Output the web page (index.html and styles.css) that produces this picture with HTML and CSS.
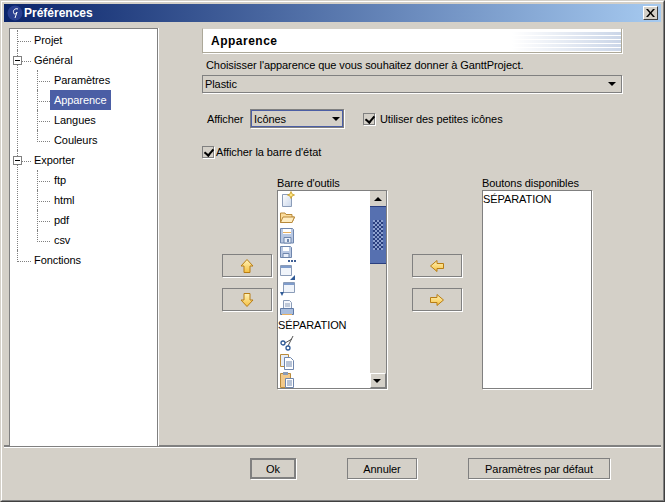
FILE: index.html
```html
<!DOCTYPE html>
<html lang="fr">

<head>
    <meta charset="utf-8">
    <title>Préférences</title>
    <link rel="stylesheet" href="styles.css">
</head>

<body>
    <svg class="defs" width="0" height="0">
        <defs>
            <linearGradient id="gold" x1="0" y1="0" x2="0" y2="1">
                <stop offset="0" stop-color="#fff3b8" />
                <stop offset="1" stop-color="#f5c040" />
            </linearGradient>
            <linearGradient id="paper" x1="0" y1="0" x2="1" y2="1">
                <stop offset="0" stop-color="#fff" />
                <stop offset="1" stop-color="#c9d6ea" />
            </linearGradient>
        </defs>
    </svg>

    <div class="window">
        <div class="window-inner">
            <div class="titlebar">
                <svg class="app-icon" width="16" height="16" viewBox="0 0 16 16">
                    <circle cx="8" cy="8" r="7.5" fill="#2a3f8f" />
                    <path d="M11 4C8 3 6 5 6.500 7.500S9 9 10 7L8 13" fill="none" stroke="#fff" stroke-width="1" />
                </svg>
                <span class="title">Préférences</span>
                <button class="close">
                    <svg width="9" height="8" viewBox="0 0 9 8">
                        <path d="M0 0h2l2.500 3L7 0h2L5.500 4 9 8H7L4.500 5 2 8H0l3.500-4z" fill="#000" />
                    </svg>
                </button>
            </div>

            <div class="main">
                <ul class="tree">
                    <li><span class="node">Projet</span></li>
                    <li>
                        <span class="toggle"></span>
                        <span class="node">Général</span>
                        <ul>
                            <li><span class="node">Paramètres</span></li>
                            <li><span class="node selected">Apparence</span></li>
                            <li><span class="node">Langues</span></li>
                            <li><span class="node">Couleurs</span></li>
                        </ul>
                    </li>
                    <li>
                        <span class="toggle"></span>
                        <span class="node">Exporter</span>
                        <ul>
                            <li><span class="node">ftp</span></li>
                            <li><span class="node">html</span></li>
                            <li><span class="node">pdf</span></li>
                            <li><span class="node">csv</span></li>
                        </ul>
                    </li>
                    <li><span class="node">Fonctions</span></li>
                </ul>

                <div class="pane">
                    <div class="pane-header">Apparence</div>
                    <p class="intro">Choisisser l'apparence que vous souhaitez donner à GanttProject.</p>
                    <div class="combo combo-wide">
                        <span>Plastic</span>
                        <span class="caret"></span>
                    </div>

                    <div class="display-row">
                        <span class="display-label">Afficher</span>
                        <div class="combo combo-focus">
                            <span>Icônes</span>
                            <span class="caret"></span>
                        </div>
                        <label class="check check-small"><span class="box"></span>Utiliser des petites icônes</label>
                    </div>

                    <label class="check check-status"><span class="box"></span>Afficher la barre d'état</label>

                    <div class="editor">
                        <div class="move-buttons">
                            <button class="btn-icon">
                                <svg width="14" height="14" viewBox="0 0 14 14">
                                    <path d="M7 .5 13 7H10v6.500H4V7H1z" fill="url(#gold)" stroke="#b87d14" />
                                </svg>
                            </button>
                            <button class="btn-icon">
                                <svg width="14" height="14" viewBox="0 0 14 14">
                                    <path d="M7 13.500 13 7H10V.5H4V7H1z" fill="url(#gold)" stroke="#b87d14" />
                                </svg>
                            </button>
                        </div>

                        <div class="list-col">
                            <div class="list-title">Barre d'outils</div>
                            <div class="list list-scroll">
                                <div class="rows">
                                    <div class="row">
                                        <svg width="16" height="18" viewBox="0 0 16 18">
                                            <path d="M3.500 3.500h9v12h-9z" fill="url(#paper)" stroke="#8b9cb8" />
                                            <path d="M12 .5 13 3l2.500 1-2.500 1-1 2.500L11 5 8.500 4 11 3z" fill="#ffe680" stroke="#c89a20" stroke-width=".8" />
                                        </svg>
                                    </div>
                                    <div class="row">
                                        <svg width="16" height="18" viewBox="0 0 16 18">
                                            <path d="M1.500 4V13.500H13L15.500 8H13V5.500H7L6 4z" fill="#fbdc9c" stroke="#b98a3a" />
                                            <path d="M1.500 13.500 4 8H15.500L13 13.500z" fill="#ffedc2" stroke="#b98a3a" />
                                        </svg>
                                    </div>
                                    <div class="row">
                                        <svg width="16" height="18" viewBox="0 0 16 18">
                                            <path d="M1.500 1.500h12l1 1v13.500H1.500z" fill="#b9c8e2" stroke="#6f86ad" />
                                            <path d="M4 2h8v5H4z" fill="#fff" />
                                            <path d="M4 5.500h8" stroke="#e8b060" />
                                            <path d="M5 10.500h7v5.500H5z" fill="#e8eef8" stroke="#6f86ad" />
                                            <path d="M8 12h2v3H8z" fill="#6f86ad" />
                                        </svg>
                                    </div>
                                    <div class="row">
                                        <svg width="17" height="18" viewBox="0 0 17 18">
                                            <path d="M1.500 1.500h10l1 1v10H1.500z" fill="#b9c8e2" stroke="#6f86ad" />
                                            <path d="M4 2h6v4H4z" fill="#fff" />
                                            <path d="M4 8.500h6v4H4z" fill="#e8eef8" stroke="#6f86ad" />
                                            <path d="M9 15h2v2H9zm3 0h2v2h-2zm3 0h2v2h-2z" fill="#3f5f95" />
                                        </svg>
                                    </div>
                                    <div class="row">
                                        <svg width="17" height="18" viewBox="0 0 17 18">
                                            <path d="M1.500 2.500h11v10h-11z" fill="#f0f4fa" stroke="#8b9cb8" />
                                            <path d="M2 3h10v2H2z" fill="#7f9ccb" />
                                            <path d="M16 12v5h-5z" fill="#2f5a96" />
                                        </svg>
                                    </div>
                                    <div class="row">
                                        <svg width="17" height="18" viewBox="0 0 17 18">
                                            <path d="M4.500 1.500h11v10h-11z" fill="#f0f4fa" stroke="#8b9cb8" />
                                            <path d="M5 2h10v2H5z" fill="#7f9ccb" />
                                            <path d="M1 11h4l-2 4z" fill="#2f5a96" />
                                        </svg>
                                    </div>
                                    <div class="row">
                                        <svg width="16" height="18" viewBox="0 0 16 18">
                                            <path d="M4.500 1.500h6l2 2v6h-8z" fill="#f4f6fb" stroke="#8b9cb8" />
                                            <path d="M6 5h5M6 7h5" stroke="#8b9cb8" />
                                            <path d="M1.500 9.500h13v6h-13z" fill="#a9bddd" stroke="#5f7aa6" />
                                            <path d="M3 15h10v1H3z" fill="#e8b060" />
                                        </svg>
                                    </div>
                                    <div class="row row-text">SÉPARATION</div>
                                    <div class="row">
                                        <svg width="16" height="18" viewBox="0 0 16 18">
                                            <path d="M14 1 9 11M13 4 6 8" stroke="#555" fill="none" />
                                            <circle cx="4" cy="8" r="2" fill="#fff" stroke="#2f5a96" stroke-width="1.300" />
                                            <circle cx="9" cy="13" r="2" fill="#fff" stroke="#2f5a96" stroke-width="1.300" />
                                        </svg>
                                    </div>
                                    <div class="row">
                                        <svg width="16" height="18" viewBox="0 0 16 18">
                                            <path d="M1.500 1.500h8v12h-8z" fill="#e6edf8" stroke="#b98a3a" />
                                            <path d="M5.500 4.500h6l3 3v9h-9z" fill="#fff" stroke="#6f86ad" />
                                            <path d="M7 9h6M7 11h6M7 13h6" stroke="#6f86ad" />
                                        </svg>
                                    </div>
                                    <div class="row">
                                        <svg width="16" height="18" viewBox="0 0 16 18">
                                            <path d="M1.500 2.500h10v14h-10z" fill="#f2c98a" stroke="#b98a3a" />
                                            <path d="M4 1h5v3H4z" fill="#8b9cb8" />
                                            <path d="M6.500 7.500h8v9h-8z" fill="#fff" stroke="#6f86ad" />
                                            <path d="M8 10h5M8 12h5M8 14h5" stroke="#6f86ad" />
                                        </svg>
                                    </div>
                                </div>
                                <div class="scrollbar">
                                    <div class="scroll-btn"><span class="caret caret-up"></span></div>
                                    <div class="scroll-thumb"><span class="grip"></span></div>
                                    <div class="scroll-track"></div>
                                    <div class="scroll-btn scroll-btn-down"><span class="caret"></span></div>
                                </div>
                            </div>
                        </div>

                        <div class="move-buttons">
                            <button class="btn-icon">
                                <svg width="14" height="12" viewBox="0 0 14 12">
                                    <path d="M.5 6 7 .5V3.500H13.500V8.500H7V11.500z" fill="url(#gold)" stroke="#b87d14" />
                                </svg>
                            </button>
                            <button class="btn-icon">
                                <svg width="14" height="12" viewBox="0 0 14 12">
                                    <path d="M13.500 6 7 .5V3.500H.5V8.500H7V11.500z" fill="url(#gold)" stroke="#b87d14" />
                                </svg>
                            </button>
                        </div>

                        <div class="list-col">
                            <div class="list-title">Boutons disponibles</div>
                            <div class="list">
                                <div class="rows">
                                    <div class="row row-text">SÉPARATION</div>
                                </div>
                            </div>
                        </div>
                    </div>
                </div>
            </div>

            <div class="footer">
                <button class="btn btn-default">Ok</button>
                <button class="btn btn-cancel">Annuler</button>
                <button class="btn btn-reset">Paramètres par défaut</button>
            </div>
        </div>
    </div>
</body>

</html>
```

FILE: styles.css
```css
* {
    box-sizing: border-box;
    font-family: "Liberation Sans", Tahoma, sans-serif;
}

html,
body {
    margin: 0;
    background-color: #d4d0c8;
}

body {
    font-size: 11px;
    letter-spacing: -.08px;
    color: #000;
}

.defs {
    position: absolute;
}

button {
    font-size: 11px;
    letter-spacing: -.08px;
    color: #000;
    padding: 0;
    background-color: #d4d0c8;
}

/* window frame */
.window {
    width: 665px;
    height: 502px;
    border: 1px solid;
    border-color: #d4d0c8 #404040 #404040 #d4d0c8;
}

.window-inner {
    height: 100%;
    border: 1px solid;
    border-color: #fff #808080 #808080 #fff;
    padding: 2px;
    display: flex;
    flex-direction: column;
}

.titlebar {
    height: 18px;
    flex: none;
    display: flex;
    align-items: center;
    padding: 0 3px;
    background: linear-gradient(to right, #0a246a, #a6caf0);
}

.app-icon {
    margin-right: 1px;
}

.title {
    color: #fff;
    font-weight: bold;
    font-size: 12px;
    letter-spacing: 0;
    flex: 1;
}

.close {
    width: 15px;
    height: 14px;
    display: flex;
    align-items: center;
    justify-content: center;
    border: 1px solid;
    border-color: #fff #404040 #404040 #fff;
}

.main {
    height: 426px;
    flex: none;
    display: flex;
    padding: 6px 0 0 5px;
    border-bottom: 1px solid #fff;
    box-shadow: inset 0 -2px 0 #808080;
}

/* tree */
.tree {
    width: 149px;
    height: 418px;
    flex: none;
    margin: 0;
    padding: 1px 0 0 7px;
    list-style: none;
    background-color: #fff;
    border: 1px solid #808080;
    border-bottom: 0;
    box-shadow: 1px 0 0 #fff;
}

.tree ul {
    margin: 0;
    padding: 0 0 0 6px;
    list-style: none;
}

.tree li {
    position: relative;
    padding-left: 14px;
}

.tree li::before {
    content: "";
    position: absolute;
    left: 0;
    top: 0;
    width: 13px;
    height: 11px;
    border-left: 1px dotted #808080;
    border-bottom: 1px dotted #808080;
}

.tree li:not(:last-child)::after {
    content: "";
    position: absolute;
    left: 0;
    top: 0;
    bottom: 0;
    border-left: 1px dotted #808080;
}

.tree ul li {
    padding-left: 13px;
}

.tree ul li::before {
    width: 12px;
}

.node {
    display: inline-block;
    height: 20px;
    line-height: 20px;
    padding: 0 3px;
    vertical-align: top;
}

.tree ul .node {
    padding: 0 4px;
}

.selected {
    color: #fff;
    background-color: #4b5ea5;
}

.toggle {
    position: absolute;
    z-index: 1;
    left: -4px;
    top: 6px;
    width: 9px;
    height: 9px;
    background: #fff linear-gradient(#000, #000) center / 5px 1px no-repeat;
    border: 1px solid #808080;
}

/* right side */
.pane {
    width: 420px;
    margin-left: 44px;
    flex: none;
}

.pane-header {
    height: 25px;
    line-height: 25px;
    padding-left: 8px;
    font-size: 12px;
    font-weight: bold;
    letter-spacing: .5px;
    border: 1px solid;
    border-color: #d4d0c8 #aca899 #aca899 #aca899;
    box-shadow: 1px 1px 0 #fff;
    background:
        linear-gradient(to right, #fff 74%, rgba(255, 255, 255, 0) 100%),
        repeating-linear-gradient(to bottom, #cbd6e8 0, #cbd6e8 3px, #fff 3px, #fff 4px) 0 3px / 100% 19px no-repeat,
        #fff;
}

.intro {
    margin: 5px 0 0 4px;
    height: 14px;
    line-height: 14px;
}

.combo {
    display: flex;
    align-items: center;
    justify-content: space-between;
    border: 1px solid #808080;
    box-shadow: 1px 1px 0 #fff;
}

.combo-wide {
    height: 18px;
    margin-top: 3px;
    padding: 0 3px 0 2px;
}

.combo-focus {
    width: 94px;
    height: 19px;
    padding: 0 1px 0 3px;
    margin-right: 19px;
    box-shadow: inset 0 0 0 1px #4b5ea5, 1px 1px 0 #fff;
}

.caret {
    width: 0;
    height: 0;
    border-left: 4px solid transparent;
    border-right: 4px solid transparent;
    border-top: 4px solid #000;
    margin-right: 2px;
}

.caret-up {
    margin: 0;
    border-top: 0;
    border-bottom: 4px solid #000;
}

.display-row {
    display: flex;
    align-items: center;
    margin: 16px 0 0 5px;
}

.display-label {
    width: 43px;
}

.check {
    display: flex;
    align-items: center;
    height: 14px;
}

.check-small .box {
    margin-right: 5px;
}

.check-status {
    margin-top: 17px;
}

.box {
    width: 12px;
    height: 12px;
    margin-right: 2px;
    border: 1px solid #808080;
    box-shadow: 1px 1px 0 #fff;
    position: relative;
}

.box::after {
    content: "";
    position: absolute;
    left: 3px;
    top: 0;
    width: 4px;
    height: 7px;
    border: solid #000;
    border-width: 0 2px 2px 0;
    transform: rotate(40deg);
}

/* toolbar editor */
.editor {
    display: flex;
    margin: 17px 0 0 20px;
}

.move-buttons {
    width: 50px;
    flex: none;
    display: flex;
    flex-direction: column;
    gap: 11px;
    padding-top: 78px;
}

.btn-icon {
    height: 23px;
    display: flex;
    align-items: center;
    justify-content: center;
    border: 1px solid #808080;
    box-shadow: 1px 1px 0 #fff;
}

.list-col {
    width: 110px;
    flex: none;
    margin-left: 5px;
}

.list-col:last-child {
    margin-left: 20px;
}

.list-col:nth-child(2) {
    margin-right: 25px;
}

.list-title {
    height: 14px;
    line-height: 14px;
    white-space: nowrap;
}

.list {
    height: 199px;
    display: flex;
    background-color: #fff;
    border: 1px solid #808080;
    box-shadow: 1px 1px 0 #fff;
}

.rows {
    flex: 1;
    overflow: hidden;
}

.row {
    height: 18px;
    padding-left: 1px;
    display: flex;
    align-items: center;
}

.row-text {
    padding-left: 0;
    padding-bottom: 3px;
}

.scrollbar {
    width: 16px;
    flex: none;
    display: flex;
    flex-direction: column;
    background-color: #d4d0c8;
}

.scroll-btn {
    height: 15px;
    display: flex;
    align-items: center;
    justify-content: center;
}

.scroll-btn-down {
    border: 1px solid;
    border-color: #fff #808080 #808080 #fff;
}

.scroll-thumb {
    height: 58px;
    display: flex;
    align-items: center;
    justify-content: center;
    background-color: #5670b0;
    border: 1px solid #2a3f7f;
    border-width: 1px 0;
}

.grip {
    width: 10px;
    height: 30px;
    background: repeating-conic-gradient(#2a3f7f 0 25%, #8ea2d0 0 50%) 0 0 / 4px 4px;
}

.scroll-track {
    flex: 1;
}

/* bottom buttons */
.footer {
    display: flex;
    align-items: flex-start;
    gap: 51px;
    padding: 10px 0 0 246px;
}

.btn {
    height: 21px;
    border: 1px solid #808080;
    box-shadow: 1px 1px 0 #fff;
}

.btn-default {
    width: 46px;
    border-width: 2px;
}

.btn-cancel {
    width: 70px;
}

.btn-reset {
    width: 142px;
}
```
